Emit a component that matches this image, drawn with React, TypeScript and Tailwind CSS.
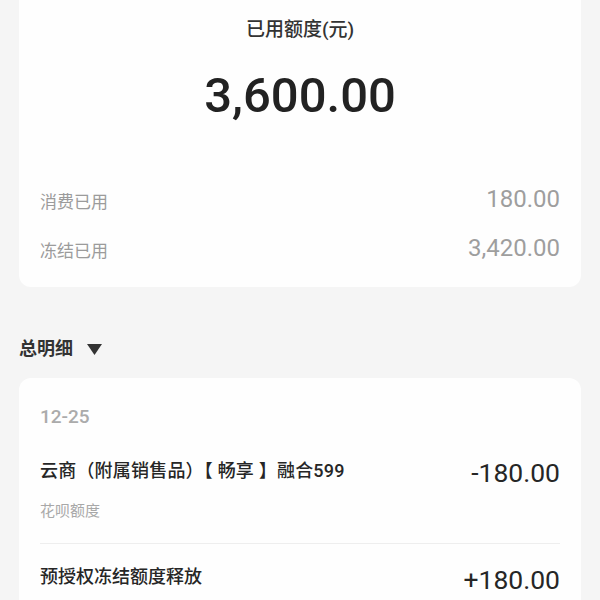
import React from 'react';

const font = "font-['Roboto','Noto_Sans_CJK_SC',sans-serif]";

function SummaryRow({ label, value }: { label: string; value: string }) {
    return (
        <div className="flex h-[49px] items-center justify-between">
            <span className="text-[17px] leading-[24px] text-[#9b9b9b]">{label}</span>
            <span className="pb-[5px] text-[24px] leading-[30px] text-[#9e9e9e]">{value}</span>
        </div>
    );
}

export default function App() {
    return (
        <div className={`${font} min-h-[600px] w-[600px] overflow-hidden bg-[#f5f5f5] pb-10`}>
            {/* Used quota card */}
            <div className="mx-[19px] rounded-b-[12px] bg-[#fefefe] px-[21px] pt-[17px] pb-[12px]">
                <div className="text-center text-[19px] leading-[26px] font-medium text-[#333333]">
                    已用额度(元)
                </div>
                <div className="mt-[28px] text-center text-[49px] leading-[50px] font-medium text-[#222222]">
                    3,600.00
                </div>
                <div className="mt-[56px]">
                    <SummaryRow label="消费已用" value="180.00" />
                    <SummaryRow label="冻结已用" value="3,420.00" />
                </div>
            </div>

            {/* Section header */}
            <div className="mt-[49px] flex items-center px-[19px]">
                <span className="text-[18px] leading-[26px] font-bold text-[#333333]">总明细</span>
                <svg className="ml-[14px]" width="15" height="11" viewBox="0 0 15 11">
                    <path d="M0 0 H15 L7.5 11 Z" fill="#333333" />
                </svg>
            </div>

            {/* Detail card */}
            <div className="mx-[19px] mt-[16px] rounded-[12px] bg-[#fefefe] px-[21px] pt-[26px]">
                <div className="text-[19px] leading-[26px] font-medium text-[#ababab]">12-25</div>

                <div className="mt-[28px] flex items-start justify-between">
                    <div>
                        <div className="text-[18px] leading-[26px] font-medium tracking-[0.2px] text-[#262626]">
                            云商（附属销售品）【 畅享 】融合599
                        </div>
                        <div className="mt-[17px] text-[15px] leading-[20px] text-[#a8a8a8]">花呗额度</div>
                    </div>
                    <span className="mt-[2px] text-[26.5px] leading-[26px] text-[#262626]">-180.00</span>
                </div>

                <div className="mt-[22px] h-px bg-[#eeeeee]" />

                <div className="mt-[20px] flex items-start justify-between">
                    <div className="text-[18px] leading-[26px] font-medium text-[#262626]">
                        预授权冻结额度释放
                    </div>
                    <span className="mt-[3px] text-[26.5px] leading-[26px] text-[#262626]">+180.00</span>
                </div>
                <div className="h-[40px]" />
            </div>
        </div>
    );
}
